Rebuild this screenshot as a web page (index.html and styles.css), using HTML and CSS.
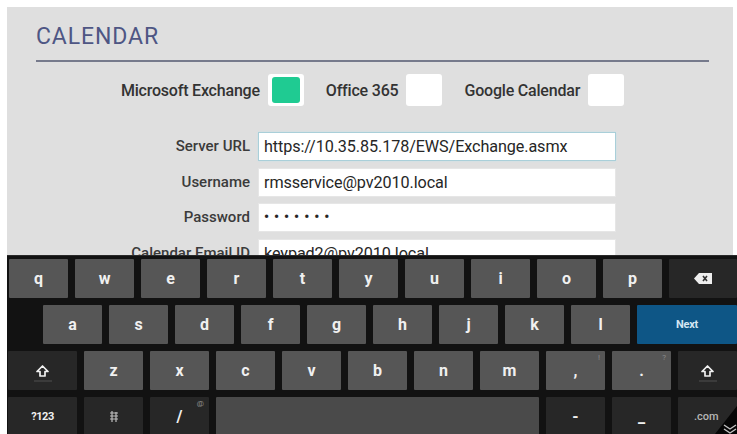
FILE: index.html
```html
<!DOCTYPE html>
<html>
<head>
<meta charset="utf-8">
<link rel="stylesheet" href="styles.css">
</head>
<body>
<div class="screen">
  <section class="panel">
    <h1 class="title">CALENDAR</h1>
    <div class="providers">
      <div class="provider"><span class="provider-name">Microsoft Exchange</span><span class="check checked"></span></div>
      <div class="provider"><span class="provider-name">Office 365</span><span class="check"></span></div>
      <div class="provider"><span class="provider-name">Google Calendar</span><span class="check"></span></div>
    </div>
    <div class="form">
      <span class="label">Server URL</span><span class="field focused">https://10.35.85.178/EWS/Exchange.asmx</span>
      <span class="label">Username</span><span class="field">rmsservice@pv2010.local</span>
      <span class="label">Password</span><span class="field dots">•••••••</span>
      <span class="label">Calendar Email ID</span><span class="field">keypad2@pv2010.local</span>
    </div>
  </section>
  <div class="keyboard">
    <div class="row row1">
      <span class="key">q</span><span class="key">w</span><span class="key">e</span><span class="key">r</span><span class="key">t</span><span class="key">y</span><span class="key">u</span><span class="key">i</span><span class="key">o</span><span class="key">p</span>
      <span class="key dark"><svg class="icon" width="18" height="11" viewBox="0 0 18 11"><path d="M5 0H18V11H5L0 5.5Z" fill="#eeeeee"/><path d="M9 3L13 8M13 3L9 8" stroke="#333" stroke-width="1.6"/></svg></span>
    </div>
    <div class="row row2">
      <span class="key">a</span><span class="key">s</span><span class="key">d</span><span class="key">f</span><span class="key">g</span><span class="key">h</span><span class="key">j</span><span class="key">k</span><span class="key">l</span>
      <span class="key next">Next</span>
    </div>
    <div class="row row3">
      <span class="key dark shift"><svg class="icon" width="13" height="12" viewBox="0 0 13 12"><path d="M6.5 1L12 6.5H9V11H4V6.5H1Z" fill="none" stroke="#f0f0f0" stroke-width="1.7" stroke-linejoin="round"/></svg><span class="lock"></span></span>
      <span class="key">z</span><span class="key">x</span><span class="key">c</span><span class="key">v</span><span class="key">b</span><span class="key">n</span><span class="key">m</span>
      <span class="key">,<span class="hint">!</span></span>
      <span class="key">.<span class="hint">?</span></span>
      <span class="key dark shift"><svg class="icon" width="13" height="12" viewBox="0 0 13 12"><path d="M6.5 1L12 6.5H9V11H4V6.5H1Z" fill="none" stroke="#f0f0f0" stroke-width="1.7" stroke-linejoin="round"/></svg><span class="lock"></span></span>
    </div>
    <div class="row row4">
      <span class="key dark small">?123</span>
      <span class="key dark"><svg class="icon" width="10" height="12" viewBox="0 0 10 12"><path d="M1 2H9M1 5H9M1 8H9M3 0V11M7 1V11" stroke="#bdbdbd" stroke-width="1.2" fill="none"/></svg></span>
      <span class="key dark">/<span class="hint">@</span></span>
      <span class="key space"></span>
      <span class="key dark">-</span>
      <span class="key dark">_</span>
      <span class="key dark com">.com</span>
    </div>
    <svg class="hide-corner" width="22" height="28" viewBox="0 0 22 28"><polygon points="22,0 22,28 0,28" fill="#060606"/><polyline points="9,19 15,23 21,19" fill="none" stroke="#c4c4c4" stroke-width="1.4"/><polyline points="9,23 15,27 21,23" fill="none" stroke="#c4c4c4" stroke-width="1.4"/></svg>
  </div>
</div>
</body>
</html>
```

FILE: styles.css
```css
* { box-sizing: border-box; }

html, body {
  margin: 0;
  padding: 0;
  background: #ffffff;
  font-family: Roboto, "Noto Sans", "Liberation Sans", sans-serif;
}

.screen {
  width: 737px;
  height: 434px;
  padding: 7px 0 0 7px;
  overflow: hidden;
}

.panel {
  width: 726px;
  height: 248px;
  background: #dfdfdf;
  overflow: hidden;
  padding: 17px 24px 0 29px;
}

.title {
  margin: 0;
  font-size: 23px;
  line-height: 26px;
  font-weight: 400;
  color: #4e5684;
  padding-bottom: 10px;
  border-bottom: 2px solid #767a8c;
  letter-spacing: 0.9px;
}

.providers {
  margin-top: 12px;
  display: flex;
  justify-content: center;
  gap: 22px;
  height: 32px;
  padding-left: 0;
}

.provider {
  display: flex;
  align-items: center;
  gap: 8px;
}

.provider-name {
  font-size: 16px;
  font-weight: 500;
  color: #333333;
  letter-spacing: -0.2px;
}

.check {
  width: 36px;
  height: 32px;
  background: #ffffff;
  border-radius: 3px;
}

.check.checked {
  padding: 3px 4px;
}

.check.checked::before {
  content: "";
  display: block;
  width: 100%;
  height: 100%;
  background: #1fcb92;
  border-radius: 3px;
}

.form {
  margin-top: 26px;
  display: grid;
  grid-template-columns: 214px 358px;
  column-gap: 8px;
  row-gap: 6.5px;
}

.label {
  text-align: right;
  font-size: 15px;
  font-weight: 500;
  color: #3b3b3b;
  line-height: 29px;
  height: 29px;
  white-space: nowrap;
}

.field {
  height: 29px;
  background: #ffffff;
  border: 1px solid #e6e6e6;
  padding: 0 5px;
  font-size: 16.2px;
  line-height: 27px;
  color: #262626;
  letter-spacing: -0.1px;
  white-space: nowrap;
  overflow: hidden;
}

.field.focused {
  border: 1px solid #a9cfd9;
  box-shadow: 0 0 2px #c8e2ea;
}

.field.dots {
  font-size: 14px;
  letter-spacing: 5px;
  font-weight: 700;
}

.keyboard {
  position: relative;
  width: 730px;
  height: 179px;
  background: #121212;
  padding-top: 3px;
  display: flex;
  flex-direction: column;
  gap: 7px;
  overflow: hidden;
  border-top: 1px solid #2a2a2a;
}

.row {
  display: grid;
  height: 39px;
  flex: none;
  column-gap: 7px;
}

.row1 {
  padding-left: 2px;
  grid-template-columns: repeat(10, 59px) 1fr;
}

.row2 {
  padding-left: 36px;
  grid-template-columns: repeat(9, 59px) 1fr;
}

.row3, .row4 {
  padding-left: 1px;
  grid-template-columns: 69px repeat(9, 59px) 1fr;
}

.key {
  position: relative;
  display: flex;
  align-items: center;
  justify-content: center;
  background: #565656;
  color: #f0f0f0;
  font-size: 16px;
  font-weight: 700;
  border-radius: 1px;
}

.key.dark {
  background: #272727;
}

.key.next {
  background: #0e5686;
  color: #d5e6f2;
  font-size: 11px;
  letter-spacing: -0.2px;
}

.key.small {
  font-size: 11px;
  letter-spacing: -0.5px;
}

.key.com {
  font-size: 11px;
  font-weight: 500;
  color: #b5b5b5;
  justify-content: flex-start;
  padding-left: 16px;
}

.key.space {
  grid-column: span 5;
  background: #4a4a4a;
}

.shift {
  flex-direction: column;
  gap: 3px;
  padding-top: 6px;
}

.lock {
  display: block;
  width: 18px;
  height: 2px;
  background: #3b3b3b;
}

.hint {
  position: absolute;
  top: 2px;
  right: 5px;
  font-size: 8px;
  font-weight: 400;
  color: #8a8a8a;
}

.icon {
  display: block;
}

.hide-corner {
  position: absolute;
  right: 0;
  bottom: 0;
}
```
